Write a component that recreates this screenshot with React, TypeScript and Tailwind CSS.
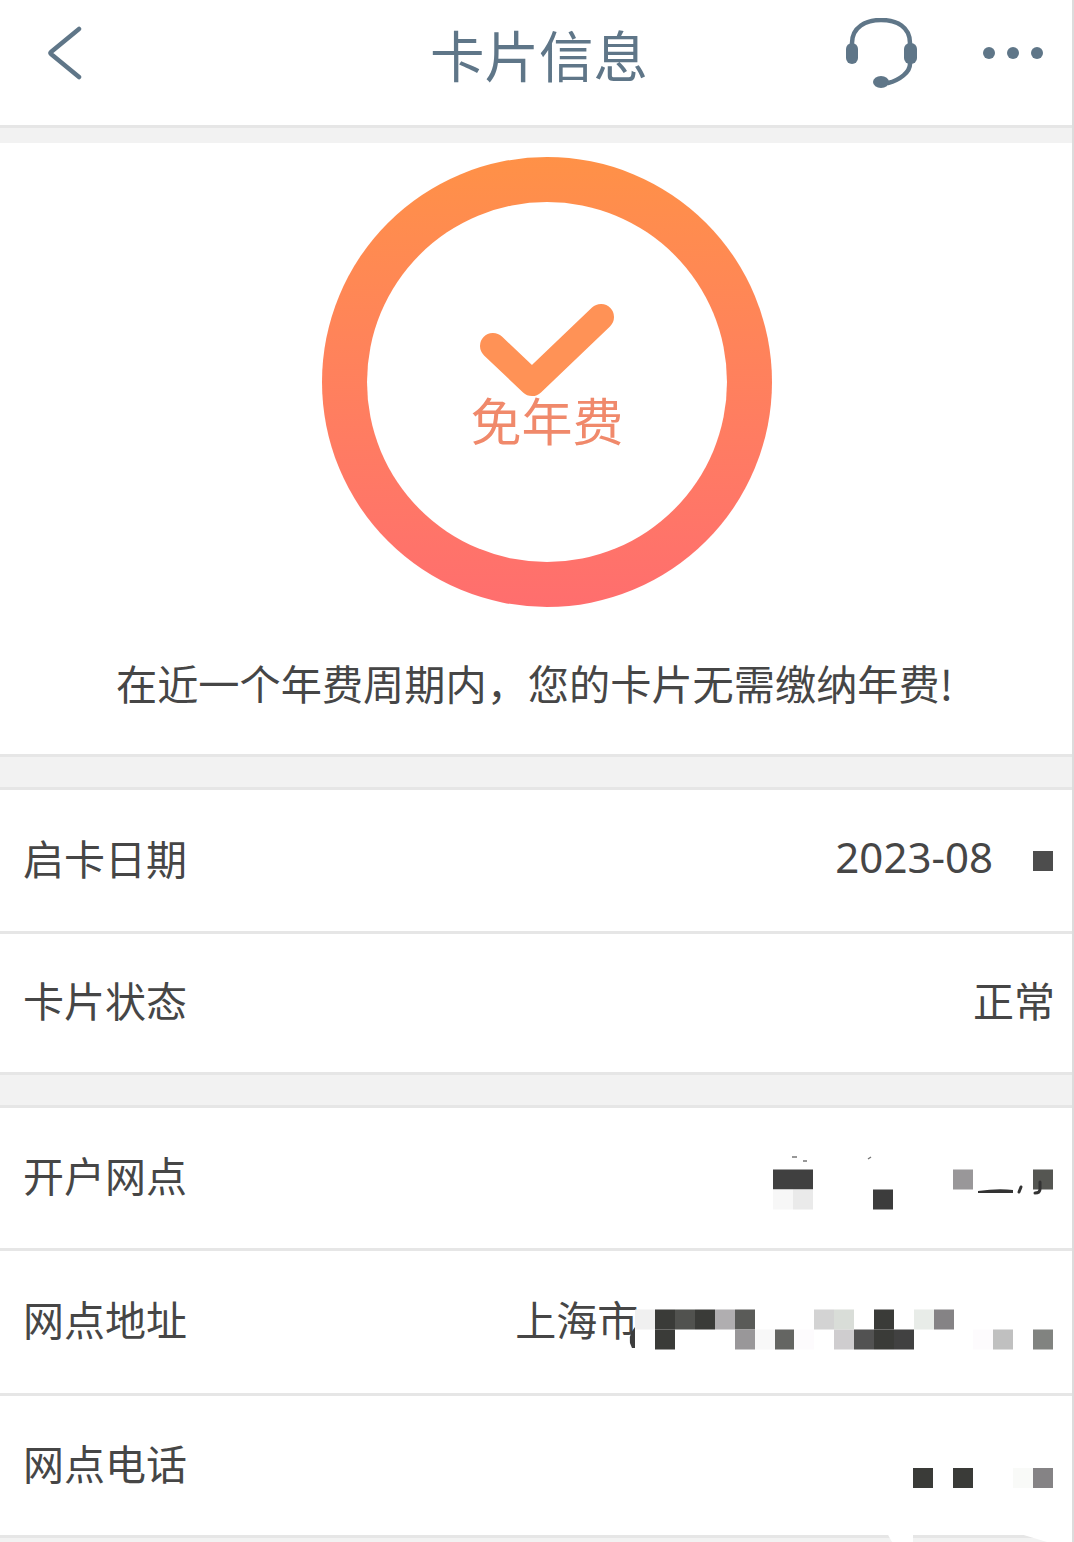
import type { ReactNode } from 'react';

const CJK = "font-['Noto_Sans_CJK_SC','Noto_Sans',sans-serif]";

/** Censored value: a grid of 20px cells. '' is an empty cell. */
function Mosaic({ cells, className }: { cells: string[]; className: string }) {
  return (
    <div className={`grid auto-rows-[20px] ${className}`}>
      {cells.map((cell, i) => (
        <div key={i} className={cell} />
      ))}
    </div>
  );
}

function Row({ label, children }: { label: string; children: ReactNode }) {
  return (
    <div className="flex h-full items-center justify-between pb-[7px] pl-[23px] pr-[19px] text-[41px] leading-none text-[#464646]">
      <span>{label}</span>
      {children}
    </div>
  );
}

const D = 'bg-[#3a3b38]';

const branchCells = [
  'bg-[#404040]', 'bg-[#404040]', '', '', '', '', '', '', '', 'bg-[#999799]', '', '', '', 'bg-[#555652]',
  'bg-[#f7f7f7]', 'bg-[#eaeaea]', '', '', '', 'bg-[#3c3c3c]', '', '', '', '', '', '', '', '',
];

const addressCells = [
  'bg-[#f0f0f0]', D, 'bg-[#51524f]', D, 'bg-[#b0aeb0]', 'bg-[#5a5b58]', '', '', '', 'bg-[#d3d3d3]', 'bg-[#d9ddd8]', '', D, '', 'bg-[#e8ece8]', 'bg-[#858385]', '', '', '', '', '',
  '', D, '', '', '', 'bg-[#999799]', 'bg-[#f8f8f8]', 'bg-[#646562]', 'bg-[#fdfbfd]', '', 'bg-[#cfcdcf]', 'bg-[#525252]', D, 'bg-[#414141]', '', '', '', 'bg-[#fdfbfd]', 'bg-[#c0c0c0]', '', 'bg-[#818380]',
];

const phoneCells = [D, '', D, '', '', 'bg-[#f9faf8]', 'bg-[#858385]'];

export default function App() {
  return (
    <div className={`relative h-[1542px] w-[1074px] overflow-hidden border-r-2 border-[#dcdcdc] bg-[#f2f2f2] ${CJK}`}>
      <header className="flex h-[128px] items-center border-b-[3px] border-[#e6e6e6] bg-white pb-[19px] pl-[46px] text-[#5f7688]">
        <svg width="38" height="54" viewBox="0 0 38 54" fill="none" className="-mt-[1px]">
          <path d="M33 3 L5 26 Q4 27 5 28 L33 51" stroke="currentColor" strokeWidth="4.5" strokeLinecap="round" strokeLinejoin="round" />
        </svg>
        <h1 className="ml-[346px] mt-[2px] w-[218px] whitespace-nowrap text-[54.5px] font-normal leading-none">卡片信息</h1>
        <svg width="76" height="71" viewBox="0 0 76 71" fill="none" className="ml-[196px]">
          <path d="M8 25 C8 9 22 2 37 2 C53 2 66 9 66 25 L66 46 C66 54 56 62 44 65" stroke="currentColor" strokeWidth="4.5" strokeLinecap="round" />
          <rect x="2" y="25" width="12" height="21" rx="6" fill="currentColor" />
          <rect x="60" y="25" width="13" height="21" rx="6" fill="currentColor" />
          <ellipse cx="37" cy="64" rx="8" ry="6" fill="currentColor" />
        </svg>
        <div className="ml-[63px] flex gap-[12px]">
          <div className="size-3 rounded-full bg-[#5f7688]" />
          <div className="size-3 rounded-full bg-[#5f7688]" />
          <div className="size-3 rounded-full bg-[#5f7688]" />
        </div>
      </header>

      <section className="mt-[15px] flex h-[614px] flex-col items-center border-b-[3px] border-[#e6e6e6] bg-white pt-[14px]">
        <div className="ml-[22px] size-[450px] rounded-full bg-gradient-to-b from-[#ff9147] to-[#ff6e6e] p-[45px]">
          <div className="flex size-full flex-col items-center rounded-full bg-white pt-[101px]">
            <svg width="136" height="94" viewBox="0 0 136 94" className="block">
              <path d="M14 43 L53 80 L122 14" fill="none" stroke="#ff9256" strokeWidth="26" strokeLinecap="round" strokeLinejoin="round" />
            </svg>
            <div className="-mt-[3px] text-[51px] leading-none text-[#f0896b]">免年费</div>
          </div>
        </div>
        <p className="mt-[55px] pr-[3px] text-[41.2px] leading-none text-[#464646]">在近一个年费周期内，您的卡片无需缴纳年费!</p>
      </section>

      <section className="mt-[30px] border-y-[3px] border-[#e6e6e6] bg-white">
        <div className="h-[144px] border-b-[3px] border-[#e6e6e6]">
          <Row label="启卡日期">
            <div className="flex items-center gap-10">
              <span className="font-['Noto_Sans',sans-serif] text-[42px]">2023-08</span>
              <div className="size-5 translate-y-[4px] bg-[#4d4d4d]" />
            </div>
          </Row>
        </div>
        <div className="h-[138px]">
          <Row label="卡片状态">
            <span className="-mr-[2px]">正常</span>
          </Row>
        </div>
      </section>

      <section className="mt-[30px] border-y-[3px] border-[#e6e6e6] bg-white">
        <div className="h-[143px] border-b-[3px] border-[#e6e6e6]">
          <Row label="开户网点">
            <Mosaic cells={branchCells} className="translate-y-[14.5px] grid-cols-[repeat(14,20px)]" />
          </Row>
        </div>
        <div className="h-[145px] border-b-[3px] border-[#e6e6e6]">
          <Row label="网点地址">
            <div className="flex items-center">
              <span className="-mr-[3px]">上海市</span>
              <Mosaic cells={addressCells} className="translate-y-[10.5px] grid-cols-[repeat(21,19.9px)]" />
            </div>
          </Row>
        </div>
        <div className="h-[139px]">
          <Row label="网点电话">
            <Mosaic cells={phoneCells} className="translate-y-[16px] grid-cols-[repeat(7,20px)]" />
          </Row>
        </div>
      </section>

      {/* leftovers of the redaction, lying over the rows */}
      <svg width="290" height="50" viewBox="0 0 290 50" className="absolute left-[770px] top-[1152px]">
        <path d="M22 5 L27 5 M33 9 L37 9 M98 7 L101 5" stroke="#777" strokeWidth="1.5" fill="none" />
        <path d="M208 39 Q228 36 243 38 L243 41 L208 41 Z" fill="#333" />
        <path d="M249 40 L251 35" stroke="#333" strokeWidth="3" strokeLinecap="round" fill="none" />
        <path d="M265 41 Q270 41 270 37 L270 30" stroke="#333" strokeWidth="3" strokeLinecap="round" fill="none" />
      </svg>
      <svg width="10" height="22" viewBox="0 0 10 22" className="absolute left-[626px] top-[1327px]">
        <path d="M9 0 Q0 10 6 21 L9 21 Z" fill="#3d3d3d" />
      </svg>
      <svg width="192" height="9" viewBox="0 0 192 9" className="absolute left-[880px] top-[1533px]">
        <path d="M7 0 L12 9 L33 9 L33 0 Z M137 0 L167 9 L192 9 L192 0 Z" fill="#fff" />
      </svg>
    </div>
  );
}
